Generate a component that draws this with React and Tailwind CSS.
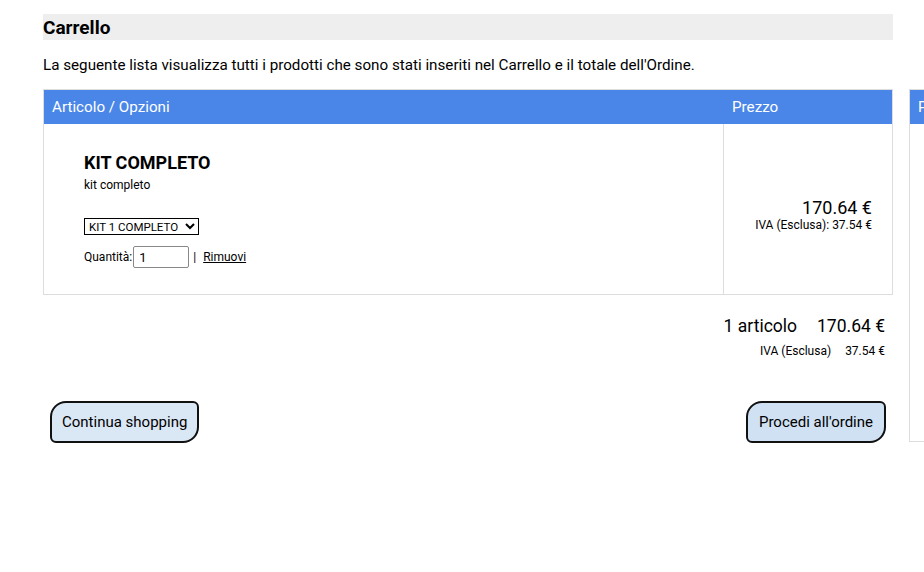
import React from "react";

const font = { fontFamily: "Roboto, 'Liberation Sans', sans-serif" };

const Cart = () => {
  return (
    <div className="w-[850px] shrink-0">
      <h1 className="mt-[14px] bg-[#eeeeee] h-[26px] flex items-center text-[19px] font-bold text-black leading-none">
        Carrello
      </h1>
      <p className="mt-[15px] text-[15.2px] leading-[20px] text-black">
        La seguente lista visualizza tutti i prodotti che sono stati inseriti nel Carrello e il totale dell'Ordine.
      </p>

      {/* tabella articoli */}
      <div className="mt-[14px] border border-[#dddddd]">
        <div className="flex h-[34px] bg-[#4a86e8] text-white text-[15.2px]">
          <div className="w-[680px] pl-[8px] flex items-center">Articolo / Opzioni</div>
          <div className="flex-1 pl-[8px] flex items-center">Prezzo</div>
        </div>
        <div className="flex h-[170px]">
          <div className="w-[680px] border-r border-[#dddddd] pl-[40px] pt-[27px]">
            <div className="text-[18px] font-bold leading-[24px]">KIT COMPLETO</div>
            <div className="text-[12px] leading-[16px] mt-[2px]">kit completo</div>
            <select className="mt-[25px] h-[17px] w-[115px] border border-black text-[11.5px] leading-none px-0 bg-white">
              <option>KIT 1 COMPLETO</option>
            </select>
            <div className="mt-[8px] flex items-center text-[12px]">
              <span>Quantità:</span>
              <input
                defaultValue="1"
                className="ml-[1px] w-[56px] h-[22px] border border-[#888] rounded-[2px] px-[5px] text-[13px]"
              />
              <span className="ml-[4px]">|</span>
              <a href="#" className="ml-[7px] underline">Rimuovi</a>
            </div>
          </div>
          <div className="flex-1 flex flex-col justify-center items-end pr-[20px] pt-[12px]">
            <div className="text-[18px] leading-[20px]">170.64 €</div>
            <div className="text-[12px] leading-[14px]">IVA (Esclusa): 37.54 €</div>
          </div>
        </div>
      </div>

      {/* totali */}
      <div className="flex flex-col items-end pr-[8px] mt-[20px]">
        <div className="flex text-[17.5px] leading-[22px]">
          <span>1 articolo</span>
          <span className="ml-[20px]">170.64 €</span>
        </div>
        <div className="flex text-[12px] leading-[14px] mt-[7px]">
          <span>IVA (Esclusa)</span>
          <span className="ml-[14px]">37.54 €</span>
        </div>
      </div>

      <div className="flex justify-between px-[7px] mt-[43px]">
        <button className="h-[42px] px-[10px] border-2 border-[#111] rounded-[16px_6px_16px_6px] bg-[#dae7f5] text-[15px]">
          Continua shopping
        </button>
        <button className="h-[42px] px-[11px] border-2 border-[#111] rounded-[16px_6px_16px_6px] bg-[#cfe1f3] text-[15px]">
          Procedi all'ordine
        </button>
      </div>
    </div>
  );
};

const Sidebar = () => (
  <div className="w-[200px] shrink-0 ml-[16px] mt-[89px] h-[353px] border border-[#dddddd]">
    <div className="h-[34px] bg-[#4a86e8] text-white text-[15.2px] pl-[8px] flex items-center">
      Prodotti
    </div>
  </div>
);

export default function App() {
  return (
    <div className="w-[924px] h-[572px] overflow-hidden bg-white text-black" style={font}>
      <div className="flex pl-[43px]">
        <Cart />
        <Sidebar />
      </div>
    </div>
  );
}
